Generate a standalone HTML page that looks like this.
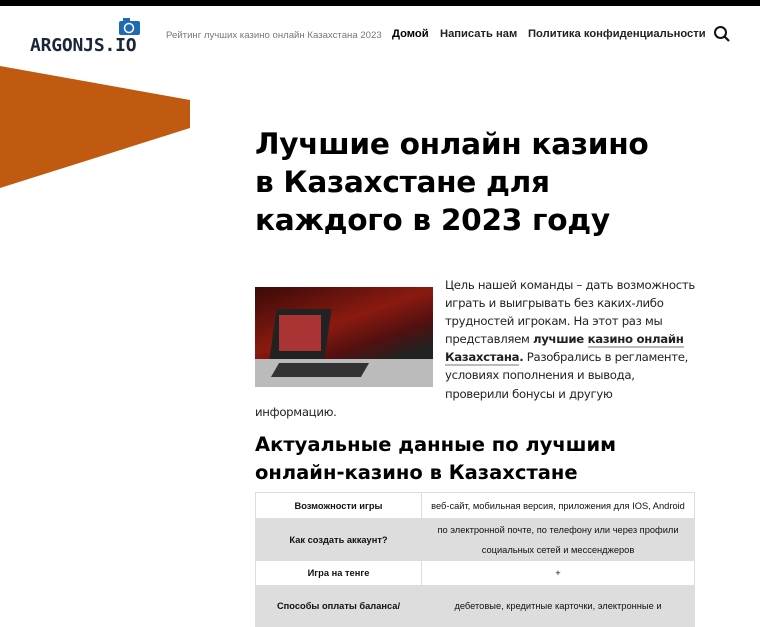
<!DOCTYPE html>
<html><head><meta charset="utf-8"><style>
body{margin:0;width:760px;height:600px;overflow:hidden;background:#fff;font-family:"Liberation Sans",sans-serif;color:#000;position:relative}
.top{position:absolute;left:0;top:0;width:760px;height:6px;background:#000}
.logo{position:absolute;left:30px;top:35px;font:bold 18px "DejaVu Sans Mono","Liberation Mono",monospace;color:#1a2638;letter-spacing:-0.2px}
.tag{position:absolute;left:166px;top:30px;font-size:9.6px;color:#777}
.nav{position:absolute;top:28px;font:bold 11.2px "Liberation Sans",sans-serif;color:#222}
h1{position:absolute;left:255px;top:125px;margin:0;font:bold 29.6px/38px "DejaVu Sans",sans-serif;letter-spacing:-0.3px;width:398px}
h2{position:absolute;left:255px;top:431px;margin:0;font:bold 19.5px/28px "DejaVu Sans",sans-serif;width:440px}
.p{position:absolute;left:255px;top:276px;width:442px;font-family:"DejaVu Sans",sans-serif;font-size:11.7px;letter-spacing:-0.3px;line-height:18.1px;color:#222}
.img{float:left;width:178px;height:100px;margin:11px 12px 0 0;background:linear-gradient(160deg,#3a0a08,#8a1a10 40%,#501010 60%,#222 75%);position:relative;overflow:hidden}
b u{text-decoration:none;border-bottom:2px solid #bbb}
table{position:absolute;left:255px;top:492px;width:440px;border-collapse:collapse;font-size:9.3px;color:#111}
td{border:1px solid #ddd;text-align:center;padding:0 4px;line-height:20px}
td:first-child{font-weight:bold;width:157px}
tr:nth-child(even) td{background:#ddd}
</style></head><body>
<div class="top"></div>
<svg style="position:absolute;left:0;top:60px" width="200" height="135"><polygon points="0,6 190,40 190,68 0,128" fill="#bf5a10"/></svg>
<svg style="position:absolute;left:118px;top:17px" width="24" height="20"><rect x="1" y="4" width="21" height="14" rx="2" fill="#1f6bb3"/><rect x="5" y="1" width="7" height="4" fill="#1f6bb3"/><circle cx="11" cy="11" r="4.5" fill="none" stroke="#fff" stroke-width="1.5"/></svg>
<div class="logo">ARGONJS.IO</div>
<div class="tag">Рейтинг лучших казино онлайн Казахстана 2023</div>
<div class="nav" style="left:392px;color:#000">Домой</div>
<div class="nav" style="left:440px">Написать нам</div>
<div class="nav" style="left:528px">Политика конфиденциальности</div>
<svg style="position:absolute;left:713px;top:25px" width="18" height="18"><circle cx="7.5" cy="7.5" r="5.5" fill="none" stroke="#111" stroke-width="2"/><line x1="11.5" y1="11.5" x2="16" y2="16" stroke="#111" stroke-width="2.2"/></svg>
<h1>Лучшие онлайн казино в Казахстане для каждого в 2023 году</h1>
<div class="p"><div class="img"><div style="position:absolute;left:0;top:72px;width:178px;height:28px;background:#bbb"></div><div style="position:absolute;left:18px;top:22px;width:55px;height:50px;background:#222;transform:skewX(-8deg)"></div><div style="position:absolute;left:24px;top:28px;width:42px;height:36px;background:#a33"></div><div style="position:absolute;left:20px;top:76px;width:90px;height:14px;background:#333;transform:skewX(-30deg)"></div></div>Цель нашей команды – дать возможность<br>играть и выигрывать без каких-либо<br>трудностей игрокам. На этот раз мы<br>представляем <b>лучшие <u>казино онлайн<br>Казахстана</u>.</b> Разобрались в регламенте,<br>условиях пополнения и вывода,<br>проверили бонусы и другую<br>информацию.</div>
<h2>Актуальные данные по лучшим онлайн-казино в Казахстане</h2>
<table>
<tr><td style="height:25px">Возможности игры</td><td>веб-сайт, мобильная версия, приложения для IOS, Android</td></tr>
<tr><td style="height:41px">Как создать аккаунт?</td><td>по электронной почте, по телефону или через профили социальных сетей и мессенджеров</td></tr>
<tr><td style="height:24px">Игра на тенге</td><td>+</td></tr>
<tr><td style="height:40px">Способы оплаты баланса/</td><td>дебетовые, кредитные карточки, электронные и</td></tr>
</table>
</body></html>
